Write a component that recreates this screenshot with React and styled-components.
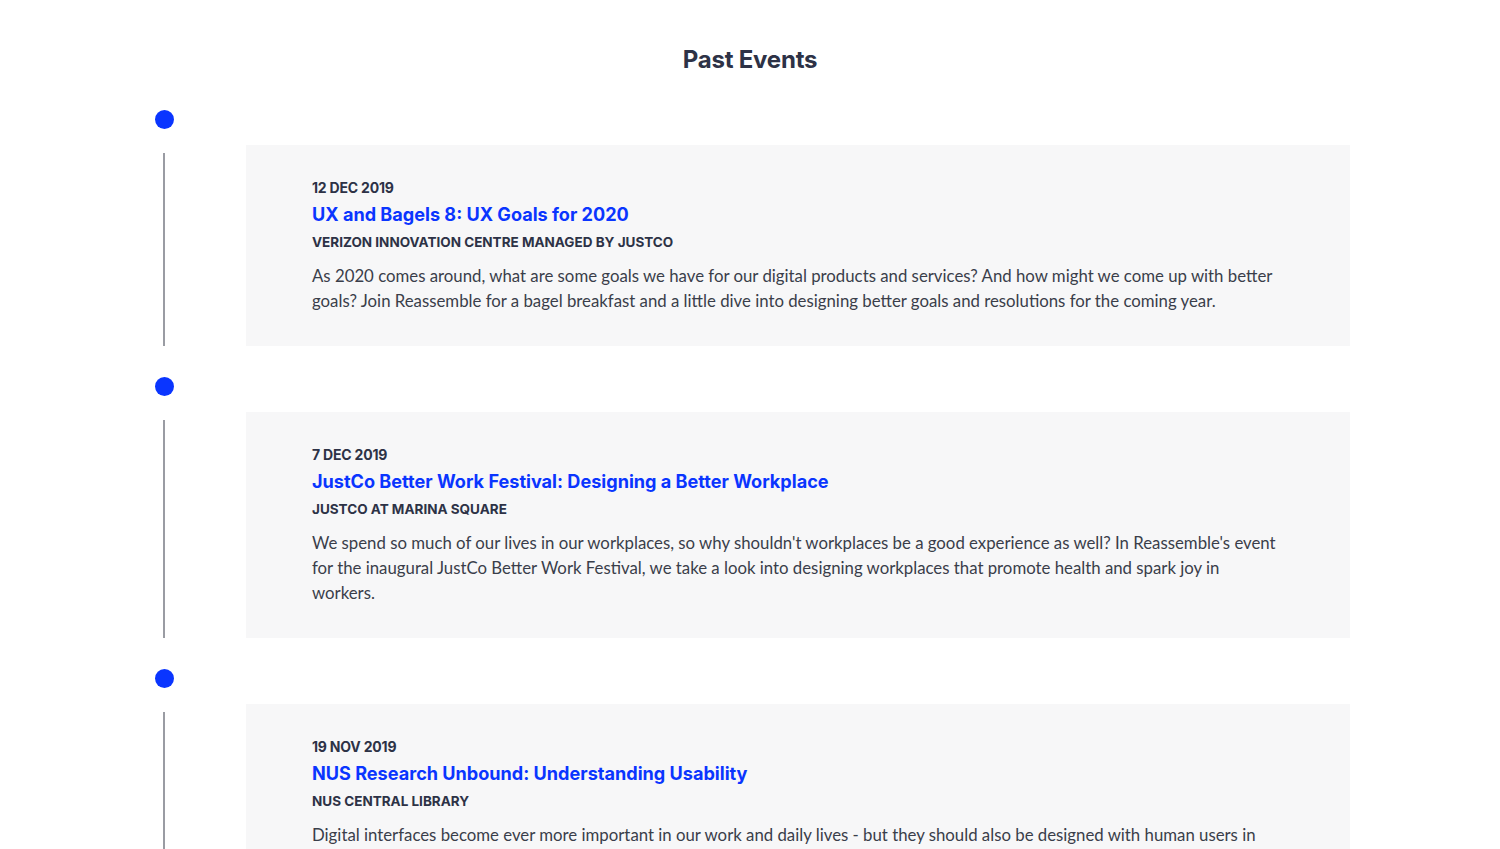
import React from "react";
import { createGlobalStyle, styled } from "styled-components";

const GlobalStyle = createGlobalStyle`
  html, body {
    margin: 0;
    padding: 0;
    background: #ffffff;
  }
  body {
    font-family: "Lato", "Noto Sans", sans-serif;
    color: #2f3443;
  }
  * {
    box-sizing: border-box;
  }
`;

const Page = styled.div`
  width: 1500px;
  padding: 44px 150px 0 155px;
`;

const Heading = styled.h2`
  margin: 0 0 0 -5px;
  text-align: center;
  font-family: "Inter", "Noto Sans", sans-serif;
  font-weight: 700;
  font-size: 24px;
  line-height: 32px;
  color: #2d3246;
  letter-spacing: -0.2px;
`;

const Timeline = styled.div`
  display: flex;
  flex-direction: column;
`;

const Item = styled.div`
  display: flex;
  flex-direction: column;
  margin-top: ${(props) => props.gapTop}px;
`;

const Dot = styled.div`
  width: 19px;
  height: 19px;
  border-radius: 50%;
  background: #0a35ff;
`;

const Row = styled.div`
  display: flex;
  margin-top: 16px;
`;

const Rail = styled.div`
  width: 91px;
  flex-shrink: 0;
  display: flex;
  padding-top: 8px;
`;

const Line = styled.div`
  width: 2px;
  margin-left: 8px;
  background: #9a9ca3;
`;

const Card = styled.div`
  flex: 1;
  background: #f7f7f8;
  padding: 35px 66px 33px 66px;
`;

const Date = styled.div`
  font-family: "Inter", "Noto Sans", sans-serif;
  font-weight: 700;
  font-size: 14px;
  line-height: 16px;
  color: #2d3246;
  letter-spacing: -0.2px;
`;

const Title = styled.a`
  display: block;
  margin-top: 6px;
  font-family: "Inter", "Noto Sans", sans-serif;
  font-weight: 700;
  font-size: 18.1px;
  line-height: 24px;
  color: #0a35ff;
  text-decoration: none;
`;

const Venue = styled.div`
  margin-top: 7px;
  font-family: "Inter", "Noto Sans", sans-serif;
  font-weight: 700;
  font-size: 13.5px;
  line-height: 18px;
  text-transform: uppercase;
  color: #2d3246;
`;

const Desc = styled.p`
  margin: 12px 0 0;
  font-family: "Lato", "Noto Sans", sans-serif;
  font-size: 16.8px;
  line-height: 25px;
  color: #3a3e4a;
`;

const events = [
  {
    date: "12 Dec 2019",
    title: "UX and Bagels 8: UX Goals for 2020",
    venue: "Verizon Innovation Centre managed by JustCo",
    desc:
      "As 2020 comes around, what are some goals we have for our digital products and services? And how might we come up with better goals? Join Reassemble for a bagel breakfast and a little dive into designing better goals and resolutions for the coming year.",
  },
  {
    date: "7 Dec 2019",
    title: "JustCo Better Work Festival: Designing a Better Workplace",
    venue: "JustCo at Marina Square",
    desc:
      "We spend so much of our lives in our workplaces, so why shouldn't workplaces be a good experience as well? In Reassemble's event for the inaugural JustCo Better Work Festival, we take a look into designing workplaces that promote health and spark joy in workers.",
  },
  {
    date: "19 Nov 2019",
    title: "NUS Research Unbound: Understanding Usability",
    venue: "NUS Central Library",
    desc:
      "Digital interfaces become ever more important in our work and daily lives - but they should also be designed with human users in mind. Join us as we look into what usability means and how research helps us build better products for everyone.",
  },
];

const App = () => {
  return (
    <>
      <GlobalStyle />
      <Page>
        <Heading>Past Events</Heading>
        <Timeline>
          {events.map((ev, i) => (
            <Item key={ev.title} gapTop={i === 0 ? 34 : 31}>
              <Dot />
              <Row>
                <Rail>
                  <Line />
                </Rail>
                <Card>
                  <Date>{ev.date.toUpperCase()}</Date>
                  <Title href="#">{ev.title}</Title>
                  <Venue>{ev.venue}</Venue>
                  <Desc>{ev.desc}</Desc>
                </Card>
              </Row>
            </Item>
          ))}
        </Timeline>
      </Page>
    </>
  );
};

export default App;
